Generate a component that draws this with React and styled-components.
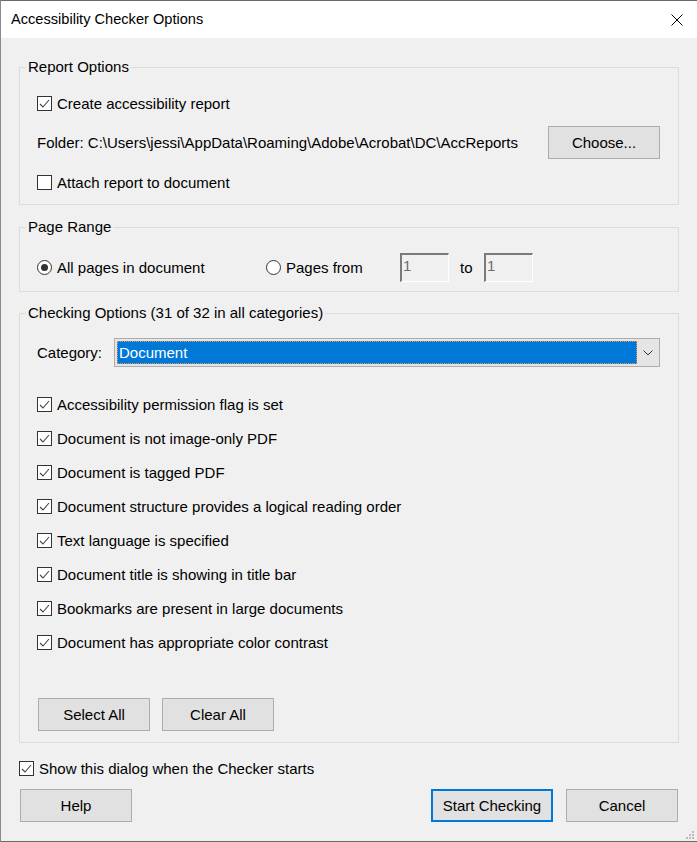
import React from "react";
import styled, { createGlobalStyle } from "styled-components";

const GlobalStyle = createGlobalStyle`
  html, body {
    margin: 0;
    padding: 0;
    background: #f0f0f0;
  }
  body {
    font-family: "Liberation Sans", Arial, sans-serif;
    font-size: 15px;
    color: #000;
  }
`;

const Window = styled.div`
  position: relative;
  width: 697px;
  height: 842px;
  box-sizing: border-box;
  border-top: 1px solid #6a6a6a;
  border-left: 1px solid #8a8a8a;
  border-bottom: 1px solid #6a6a6a;
  background: #f0f0f0;
  display: flex;
  flex-direction: column;
`;

const TitleBar = styled.div`
  height: 37px;
  flex-shrink: 0;
  background: #fff;
  display: flex;
  align-items: center;
  justify-content: space-between;
  padding: 0 14px 0 10px;
`;

const Title = styled.span`
  font-size: 14.6px;
  padding-bottom: 1px;
`;

const Body = styled.div`
  display: flex;
  flex-direction: column;
  padding: 20px 18px 0 18px;
`;

const GroupBox = styled.fieldset`
  margin: ${(p) => p.$mt}px 0 0 0;
  min-width: 0;
  border: 1px solid #dcdcdc;
  padding: ${(p) => p.$pt}px 18px ${(p) => p.$pb}px 17px;
  display: flex;
  flex-direction: column;
`;

const Legend = styled.legend`
  padding: 0 2px;
  margin-left: -11px;
  line-height: 18px;
`;

const Stack = styled.div`
  display: flex;
  flex-direction: column;
  gap: ${(p) => p.$gap}px;
  margin-top: ${(p) => p.$mt || 0}px;
`;

const CheckRow = styled.label`
  display: flex;
  align-items: center;
  height: 18px;
  gap: 5px;
  white-space: nowrap;
`;

const Box = styled.span`
  width: 15px;
  height: 15px;
  box-sizing: border-box;
  border: 1px solid #333;
  background: #fff;
  display: inline-flex;
  flex-shrink: 0;
`;

const Round = styled(Box)`
  border-radius: 50%;
  align-items: center;
  justify-content: center;
  &::after {
    content: "";
    display: ${(p) => (p.$on ? "block" : "none")};
    width: 7px;
    height: 7px;
    border-radius: 50%;
    background: #333;
  }
`;

const FolderRow = styled.div`
  display: flex;
  align-items: center;
  justify-content: space-between;
  height: 33px;
`;

const Button = styled.button`
  width: ${(p) => p.$w || 112}px;
  height: 33px;
  box-sizing: border-box;
  background: #e1e1e1;
  border: ${(p) => (p.$focused ? "2px solid #0078d7" : "1px solid #adadad")};
  font-family: inherit;
  font-size: 15px;
  color: #000;
  padding: 0;
  margin-left: ${(p) => p.$ml || 0}px;
`;

const RangeRow = styled.div`
  display: flex;
  align-items: center;
  height: 30px;
`;

const RadioOption = styled(CheckRow)`
  width: ${(p) => p.$w}px;
  flex-shrink: 0;
`;

const PageInput = styled.div`
  width: 49px;
  height: 29px;
  box-sizing: border-box;
  border-top: 2px solid #7a7a7a;
  border-left: 2px solid #7a7a7a;
  border-right: 1px solid #fff;
  border-bottom: 1px solid #fff;
  color: #6d6d6d;
  padding: 2px 0 0 1px;
  line-height: 18px;
`;

const ToLabel = styled.span`
  width: 24px;
  padding-left: 11px;
  flex-shrink: 0;
`;

const CategoryRow = styled.div`
  display: flex;
  align-items: center;
  height: 29px;
`;

const CategoryLabel = styled.span`
  width: 77px;
  flex-shrink: 0;
`;

const Select = styled.div`
  flex: 1;
  height: 29px;
  box-sizing: border-box;
  border: 1px solid #adadad;
  background: #e5e5e5;
  display: flex;
  padding: 2px 0 2px 2px;
`;

const Selected = styled.div`
  flex: 1;
  background: #0078d7;
  color: #fff;
  border: 1px dotted #e9954a;
  padding-left: 1px;
  display: flex;
  align-items: center;
`;

const Chevron = styled.div`
  width: 22px;
  display: flex;
  align-items: center;
  justify-content: center;
`;

const ButtonRow = styled.div`
  display: flex;
  gap: 12px;
  margin-top: ${(p) => p.$mt}px;
`;

const ShowRow = styled(CheckRow)`
  margin-top: 16px;
`;

const Footer = styled.div`
  display: flex;
  align-items: center;
  margin-top: 12px;
  padding-right: 1px;
  gap: 13px;
`;

const Spacer = styled.div`
  flex: 1;
`;

const Grip = styled.svg`
  position: absolute;
  right: 2px;
  bottom: 2px;
`;

const Check = ({ checked }) => (
  <Box>
    {checked && (
      <svg width="13" height="13" viewBox="0 0 13 13">
        <polyline points="2,7 5,10 11,3" fill="none" stroke="#444" strokeWidth="1.1" />
      </svg>
    )}
  </Box>
);

const Checkbox = ({ checked, children }) => (
  <CheckRow>
    <Check checked={checked} />
    {children}
  </CheckRow>
);

const checks = [
  "Accessibility permission flag is set",
  "Document is not image-only PDF",
  "Document is tagged PDF",
  "Document structure provides a logical reading order",
  "Text language is specified",
  "Document title is showing in title bar",
  "Bookmarks are present in large documents",
  "Document has appropriate color contrast",
];

const App = () => (
  <Window>
    <GlobalStyle />
    <TitleBar>
      <Title>Accessibility Checker Options</Title>
      <svg width="12" height="12" viewBox="0 0 12 12">
        <path d="M0.5 0.5 L11.5 11.5 M11.5 0.5 L0.5 11.5" stroke="#000" strokeWidth="1" />
      </svg>
    </TitleBar>
    <Body>
      <GroupBox $mt={0} $pt={18} $pb={13}>
        <Legend>Report Options</Legend>
        <Stack $gap={14}>
          <Checkbox checked>Create accessibility report</Checkbox>
          <FolderRow>
            <span>Folder: C:\Users\jessi\AppData\Roaming\Adobe\Acrobat\DC\AccReports</span>
            <Button>Choose...</Button>
          </FolderRow>
          <Checkbox>Attach report to document</Checkbox>
        </Stack>
      </GroupBox>

      <GroupBox $mt={13} $pt={16} $pb={9}>
        <Legend>Page Range</Legend>
        <RangeRow>
          <RadioOption $w={229}>
            <Round $on />
            All pages in document
          </RadioOption>
          <RadioOption $w={134}>
            <Round />
            Pages from
          </RadioOption>
          <PageInput>1</PageInput>
          <ToLabel>to</ToLabel>
          <PageInput>1</PageInput>
        </RangeRow>
      </GroupBox>

      <GroupBox $mt={12} $pt={16} $pb={11}>
        <Legend>Checking Options (31 of 32 in all categories)</Legend>
        <CategoryRow>
          <CategoryLabel>Category:</CategoryLabel>
          <Select>
            <Selected>Document</Selected>
            <Chevron>
              <svg width="10" height="6" viewBox="0 0 10 6">
                <polyline points="0.5,0.5 5,5 9.5,0.5" fill="none" stroke="#333" strokeWidth="1" />
              </svg>
            </Chevron>
          </Select>
        </CategoryRow>
        <Stack $gap={16} $mt={28}>
          {checks.map((c) => (
            <Checkbox key={c} checked>
              {c}
            </Checkbox>
          ))}
        </Stack>
        <ButtonRow $mt={47}>
          <Button $w={112} $ml={1}>Select All</Button>
          <Button $w={112}>Clear All</Button>
        </ButtonRow>
      </GroupBox>

      <ShowRow>
        <Check checked />
        Show this dialog when the Checker starts
      </ShowRow>

      <Footer>
        <Button $w={112} $ml={1}>Help</Button>
        <Spacer />
        <Button $w={122} $focused>Start Checking</Button>
        <Button $w={112}>Cancel</Button>
      </Footer>
    </Body>
    <Grip width="9" height="8" viewBox="0 0 9 8">
      <rect x="6" y="0" width="2" height="2" fill="#bdbdbd" />
      <rect x="3" y="3" width="2" height="2" fill="#bdbdbd" />
      <rect x="6" y="3" width="2" height="2" fill="#bdbdbd" />
      <rect x="0" y="6" width="2" height="2" fill="#bdbdbd" />
      <rect x="3" y="6" width="2" height="2" fill="#bdbdbd" />
      <rect x="6" y="6" width="2" height="2" fill="#bdbdbd" />
    </Grip>
  </Window>
);

export default App;
